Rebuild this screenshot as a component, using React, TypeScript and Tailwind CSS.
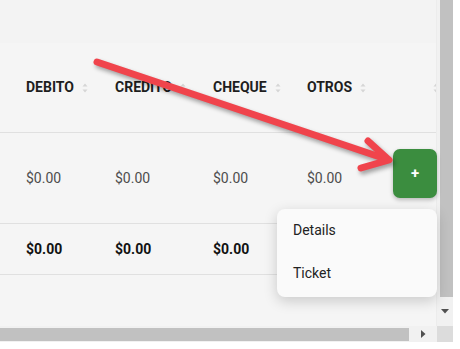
import React from "react";

const cols = ["DEBITO", "CREDITO", "CHEQUE", "OTROS"];
const widths = ["w-[89px]", "w-[98px]", "w-[94px]", "w-[94px]"];

function SortIcon() {
  return (
    <svg width="6" height="10" viewBox="0 0 6 10" className="shrink-0">
      <path d="M3 0.5 L5.5 3.5 L0.5 3.5 Z" fill="#d6d6d6" />
      <path d="M3 9.5 L5.5 6.5 L0.5 6.5 Z" fill="#d6d6d6" />
    </svg>
  );
}

function Row({ bold, h, border }: { bold?: boolean; h: string; border?: boolean }) {
  return (
    <div className={`flex items-center ${h} ${border ? "border-b border-[#e0e0e0]" : ""}`}>
      {cols.map((c, i) => (
        <div key={c} className={`${widths[i]} shrink-0 pl-[26px] text-[14px] ${bold ? "font-bold text-[#111]" : "text-[#4d4d4d]"}`}>
          $0.00
        </div>
      ))}
      <div className="w-[140px] shrink-0" />
    </div>
  );
}

export default function App() {
  return (
    <div className="relative w-[460px] h-[349px] bg-white overflow-hidden" style={{ fontFamily: "Roboto, 'Liberation Sans', sans-serif" }}>
      <div className="w-[453px] h-[342px] flex flex-col">
        <div className="flex h-[326px]">
          {/* content */}
          <div className="w-[437px] overflow-hidden bg-[#f5f5f5] border-r border-[#ececec]">
            <div className="h-[43px] bg-[#f3f3f3]" />
            <div className="flex items-center h-[90px] border-b border-[#e0e0e0]">
              {cols.map((c, i) => (
                <div key={c} className={`${widths[i]} shrink-0 pl-[26px] flex items-center gap-[8px] text-[14px] font-bold text-[#1e1e1e]`}>
                  <span>{c}</span>
                  <SortIcon />
                </div>
              ))}
              <div className="w-[140px] shrink-0 pl-[58px] flex items-center">
                <SortIcon />
              </div>
            </div>
            <Row h="h-[91px]" border />
            <Row h="h-[51px]" bold border />
          </div>
          {/* vertical scrollbar */}
          <div className="w-[16px] bg-[#f1f1f1] flex flex-col items-center">
            <div className="w-[13px] ml-[2px] h-[297px] bg-[#c1c1c1]" />
            <div className="flex-1 flex items-center justify-center">
              <svg width="8" height="5" viewBox="0 0 8 5"><path d="M0 0 L8 0 L4 4.5 Z" fill="#505050" /></svg>
            </div>
          </div>
        </div>
        {/* horizontal scrollbar */}
        <div className="flex h-[16px]">
          <div className="w-[437px] bg-[#f1f1f1] flex items-center">
            <div className="w-[409px] h-[13px] bg-[#c1c1c1]" />
            <div className="flex-1 flex items-center justify-center">
              <svg width="5" height="8" viewBox="0 0 5 8"><path d="M0 0 L0 8 L4.5 4 Z" fill="#505050" /></svg>
            </div>
          </div>
          <div className="w-[16px] bg-[#dcdcdc]" />
        </div>
      </div>

      {/* action button */}
      <button className="absolute left-[393px] top-[149px] w-[44px] h-[49px] rounded-[7px] bg-[#3b8d3f] text-white font-bold text-[15px] flex items-center justify-center shadow-[0_2px_4px_rgba(0,0,0,0.25)]">
        +
      </button>

      {/* dropdown menu */}
      <div className="absolute left-[277px] top-[209px] w-[160px] pb-[2px] rounded-[8px] bg-[#fafafa] shadow-[0_4px_14px_rgba(0,0,0,0.18)] text-[14px] text-[#222]">
        <div className="h-[42px] px-4 flex items-center">Details</div>
        <div className="h-[44px] px-4 flex items-center">Ticket</div>
      </div>

      {/* annotation arrow */}
      <svg className="absolute left-0 top-0" width="460" height="349" style={{ filter: "drop-shadow(2px 3px 2px rgba(0,0,0,0.35))" }}>
        <line x1="97" y1="62" x2="386" y2="159" stroke="#f0444c" strokeWidth="7" strokeLinecap="round" />
        <polyline points="368,141 389,160 361,168" fill="none" stroke="#f0444c" strokeWidth="7" strokeLinecap="round" strokeLinejoin="round" />
      </svg>
    </div>
  );
}
